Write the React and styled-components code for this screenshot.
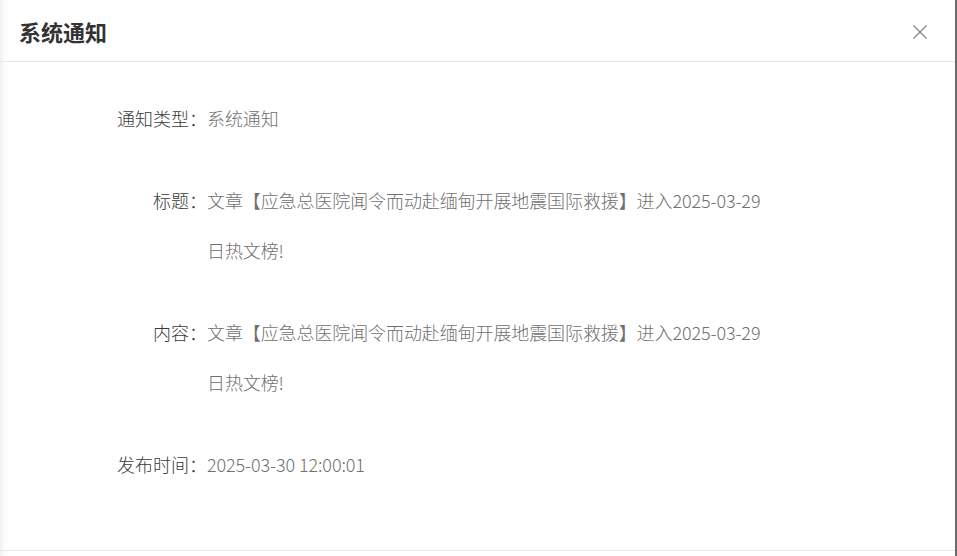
import React from 'react';
import styled, { createGlobalStyle } from 'styled-components';

const GlobalStyle = createGlobalStyle`
  html, body {
    margin: 0;
    padding: 0;
    height: 100%;
    background: #6b6b6b;
    overflow: hidden;
  }
  #root {
    height: 100%;
  }
`;

const Dialog = styled.div`
  width: 955px;
  height: 556px;
  background: #fff;
  display: flex;
  flex-direction: column;
  box-shadow: inset 7px 0 6px -5px rgba(0, 0, 0, 0.08);
  font-family: "Noto Sans CJK SC", "Noto Sans", sans-serif;
`;

const Header = styled.div`
  height: 61px;
  border-bottom: 1px solid #e8e8e8;
  display: flex;
  align-items: center;
  justify-content: space-between;
  padding: 0 26px 0 19px;
`;

const Title = styled.h2`
  margin: 0;
  font-size: 22px;
  font-weight: 700;
  color: #333;
  line-height: 1;
`;

const CloseButton = styled.button`
  border: 0;
  background: none;
  padding: 0;
  width: 18px;
  height: 18px;
  display: flex;
  align-items: center;
  justify-content: center;
  cursor: pointer;
  margin-top: 2px;
`;

const Body = styled.div`
  flex: 1;
  padding-top: 31px;
  display: flex;
  flex-direction: column;
  gap: 32px;
`;

const Row = styled.div`
  display: grid;
  grid-template-columns: 207px 570px;
  font-size: 18px;
  font-weight: 300;
  line-height: 50px;
`;

const Label = styled.div`
  text-align: right;
  color: #3a3a3a;
  white-space: nowrap;
`;

const Value = styled.div`
  color: #707070;
  letter-spacing: -0.1px;
`;

const Footer = styled.div`
  height: 5px;
  border-top: 1px solid #e8e8e8;
`;

const fields = [
  { label: '通知类型：', value: '系统通知' },
  { label: '标题：', value: '文章【应急总医院闻令而动赴缅甸开展地震国际救援】进入2025-03-29日热文榜!' },
  { label: '内容：', value: '文章【应急总医院闻令而动赴缅甸开展地震国际救援】进入2025-03-29日热文榜!' },
  { label: '发布时间：', value: '2025-03-30 12:00:01' },
];

export default function App() {
  return (
    <>
      <GlobalStyle />
      <Dialog>
        <Header>
          <Title>系统通知</Title>
          <CloseButton aria-label="关闭">
            <svg width="16" height="16" viewBox="0 0 16 16">
              <path d="M1.5 1.5 L14.5 14.5 M14.5 1.5 L1.5 14.5" stroke="#8a8a8a" strokeWidth="1.4" fill="none" />
            </svg>
          </CloseButton>
        </Header>
        <Body>
          {fields.map((f) => (
            <Row key={f.label}>
              <Label>{f.label}</Label>
              <Value>{f.value}</Value>
            </Row>
          ))}
        </Body>
        <Footer />
      </Dialog>
    </>
  );
}
